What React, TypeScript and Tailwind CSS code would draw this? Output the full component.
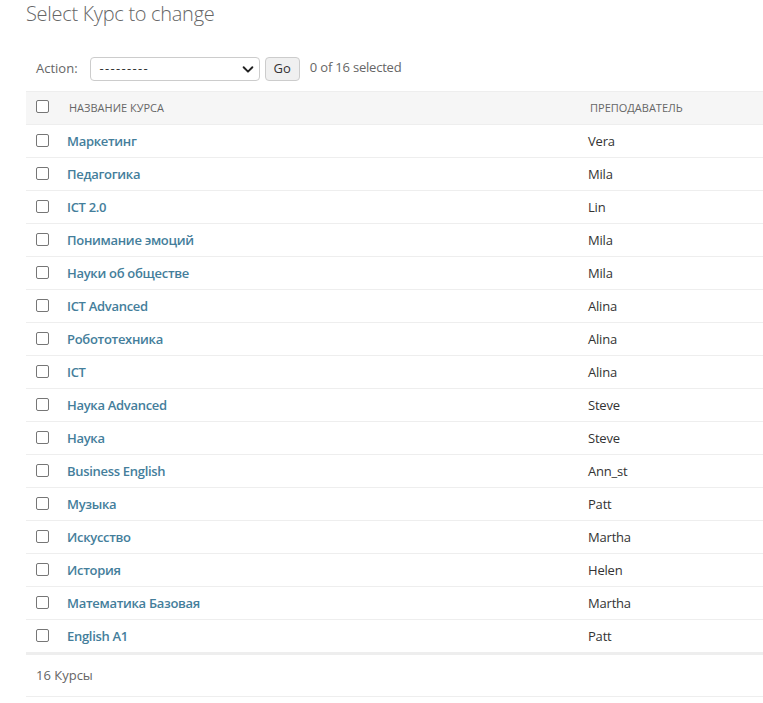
const courses: [string, string][] = [
  ["Маркетинг", "Vera"],
  ["Педагогика", "Mila"],
  ["ICT 2.0", "Lin"],
  ["Понимание эмоций", "Mila"],
  ["Науки об обществе", "Mila"],
  ["ICT Advanced", "Alina"],
  ["Робототехника", "Alina"],
  ["ICT", "Alina"],
  ["Наука Advanced", "Steve"],
  ["Наука", "Steve"],
  ["Business English", "Ann_st"],
  ["Музыка", "Patt"],
  ["Искусство", "Martha"],
  ["История", "Helen"],
  ["Математика Базовая", "Martha"],
  ["English A1", "Patt"],
];

function Box() {
  return (
    <span className="-mt-[3px] block h-[13px] w-[13px] rounded-[2px] border border-[#767676] bg-white" />
  );
}

export default function App() {
  return (
    <div
      className="min-h-[703px] bg-white pl-[26px] text-[13px] text-[#333]"
      style={{ fontFamily: '"Open Sans", "Noto Sans", sans-serif' }}
    >
      <h1 className="pt-[2px] text-[20px] font-light leading-[24px] tracking-[-0.3px] text-[#666]">
        Select Курс to change
      </h1>

      <div className="mt-[31px] flex h-[24px] items-center pl-[10px] text-[#666]">
        <span className="mr-[12px]">Action:</span>
        <div className="flex h-[24px] w-[170px] items-center justify-between rounded-[4px] border border-[#ccc] bg-white pl-[9px] pr-[4px] text-[#333]">
          <span className="tracking-[1.3px]">---------</span>
          <svg width="14" height="14" viewBox="0 0 16 16" fill="none">
            <path d="M3 6l5 5 5-5" stroke="#222" strokeWidth="2.2" strokeLinecap="round" strokeLinejoin="round" />
          </svg>
        </div>
        <button className="ml-[5px] h-[24px] rounded-[4px] border border-[#ccc] bg-[#f0f0f0] px-[8px] text-[#333]">
          Go
        </button>
        <span className="ml-[10px] -mt-[3px] tracking-[-0.2px]">0 of 16 selected</span>
      </div>

      <div className="mt-[10px] border-t border-[#eee]">
        <div className="grid h-[33px] grid-cols-[33px_519px_1fr] items-center border-b border-[#eee] bg-[#f6f6f6] text-[11px] uppercase text-[#666]">
          <div className="pl-[10px]">
            <Box />
          </div>
          <div className="pl-[10px]">Название курса</div>
          <div className="pl-[12px]">Преподаватель</div>
        </div>
        {courses.map(([name, teacher]) => (
          <div
            key={name}
            className="grid h-[33px] grid-cols-[33px_519px_1fr] items-center border-b border-[#eee] pt-[1px]"
          >
            <div className="pl-[10px]">
              <Box />
            </div>
            <div className="pl-[8px] font-semibold tracking-[-0.3px] text-[#447e9b]">{name}</div>
            <div className="pl-[10px] tracking-[-0.2px]">{teacher}</div>
          </div>
        ))}
      </div>

      <div className="flex h-[43px] items-center border-t-2 border-[#eee] pl-[10px] text-[#666]">
        16 Курсы
      </div>
      <div className="border-t border-[#eee]" />
    </div>
  );
}
